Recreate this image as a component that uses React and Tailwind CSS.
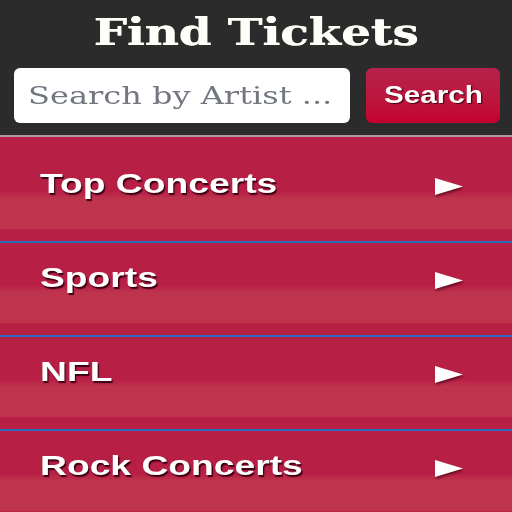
import React from "react";

const rows = ["Top Concerts", "Sports", "NFL", "Rock Concerts"];

function Arrow() {
  return (
    <svg
      width="28"
      height="18"
      viewBox="0 0 28 18"
      className="drop-shadow-[1px_2px_1px_rgba(40,0,10,0.55)]"
    >
      <polygon points="0,0 28,8.5 0,17" fill="#ffffff" />
    </svg>
  );
}

export default function App() {
  return (
    <div className="w-[512px] h-[512px] overflow-hidden bg-[#b81f45] flex flex-col">
      <div className="h-[137px] shrink-0 bg-[#2b2b2b] border-b-2 border-[#ab9b9e] flex flex-col">
        <div className="pt-[13px] flex justify-center">
          <span className="font-['DejaVu_Serif',serif] font-bold text-[38px] leading-[38px] text-[#fffdf8] scale-x-[1.23] origin-center whitespace-nowrap [text-shadow:0.5px_0_0_#fffdf8]">
            Find Tickets
          </span>
        </div>
        <div className="mt-[17px] flex items-center pl-[14px] pr-[12px]">
          <div className="w-[336px] h-[55px] rounded-[6px] bg-white overflow-hidden">
            <input
              type="text"
              placeholder="Search by Artist ..."
              className="w-[263px] h-[55px] bg-transparent pl-[11px] pr-[4px] font-['DejaVu_Serif',serif] text-[25px] text-[#555] placeholder:text-[#737780] outline-none scale-x-[1.28] origin-left"
            />
          </div>
          <button className="ml-[16px] w-[134px] h-[55px] rounded-[6px] bg-linear-to-b from-[#b5224a] to-[#c4002f] flex items-center justify-center">
            <span className="font-['Liberation_Sans',Arial,sans-serif] font-bold text-[23px] leading-none text-white scale-x-[1.29] origin-center [text-shadow:1px_1px_1px_#4a0014]">
              Search
            </span>
          </button>
        </div>
      </div>
      <div className="pt-[12px] flex flex-col">
        {rows.map((r) => (
          <div
            key={r}
            className="h-[94px] shrink-0 border-b-2 border-[#2a6cc0] bg-[linear-gradient(to_bottom,#b81f45_0%,#b81f45_46%,#bf344d_54%,#bf344d_86%,#b81f45_88%,#b81f45_100%)] flex items-start"
          >
            <div className="pt-[21px] pl-[40px] flex-1">
              <span className="inline-block font-['Liberation_Sans',Arial,sans-serif] font-bold text-[28px] leading-[28px] text-white scale-x-[1.33] origin-left whitespace-nowrap [text-shadow:1px_2px_1px_#3a0012]">
                {r}
              </span>
            </div>
            <div className="pt-[29px] pr-[49px]">
              <Arrow />
            </div>
          </div>
        ))}
      </div>
    </div>
  );
}
